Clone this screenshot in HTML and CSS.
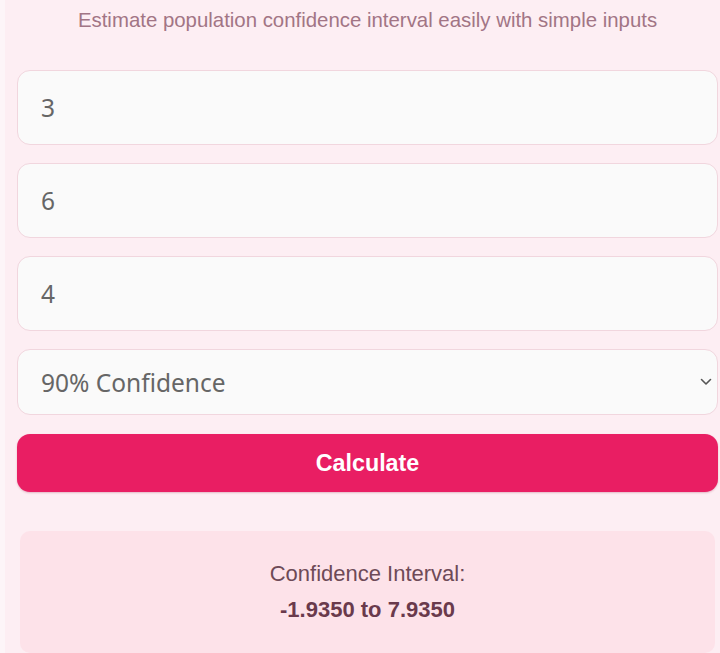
FILE: index.html
```html
<!DOCTYPE html>
<html lang="en">
<head>
<meta charset="utf-8">
<title>Confidence Interval Calculator</title>
<link rel="stylesheet" href="styles.css">
</head>
<body>
<main class="panel">
  <p class="subtitle">Estimate population confidence interval easily with simple inputs</p>
  <form class="form">
    <input class="field" type="number" value="3" aria-label="Sample mean">
    <input class="field" type="number" value="6" aria-label="Standard deviation">
    <input class="field" type="number" value="4" aria-label="Sample size">
    <div class="select-wrap">
      <select class="field select" aria-label="Confidence level">
        <option selected>90% Confidence</option>
        <option>95% Confidence</option>
        <option>99% Confidence</option>
      </select>
      <svg class="chevron" viewBox="0 0 12 8" width="12" height="8" aria-hidden="true">
        <path d="M1.5 1.5 L6 6 L10.5 1.5" fill="none" stroke="#555" stroke-width="1.6" stroke-linecap="round" stroke-linejoin="round"/>
      </svg>
    </div>
    <button class="btn" type="button">Calculate</button>
  </form>
  <section class="result">
    <div class="result-label">Confidence Interval:</div>
    <div class="result-value">-1.9350 to 7.9350</div>
  </section>
</main>
</body>
</html>
```

FILE: styles.css
```css
html, body {
  margin: 0;
  padding: 0;
}

body {
  background: #fdf5f8;
  font-family: "Liberation Sans", Arial, sans-serif;
  overflow: hidden;
}

.panel {
  margin-left: 5px;
  background: #fdeef3;
  padding: 0 2px 20px 12px;
  min-height: 653px;
  box-sizing: border-box;
}

.subtitle {
  margin: 0;
  padding-top: 8px;
  height: 70px;
  box-sizing: border-box;
  text-align: center;
  font-size: 20.4px;
  line-height: 24px;
  color: #a27585;
}

.form {
  display: flex;
  flex-direction: column;
  gap: 18px;
}

.field {
  display: block;
  width: 100%;
  box-sizing: border-box;
  height: 75px;
  padding: 0 0 0 23px;
  border: 1.5px solid #f1d6de;
  border-radius: 13px;
  background: #fafafa;
  font-family: "Noto Sans", "Open Sans", sans-serif;
  font-size: 24.5px;
  color: #666;
  outline: none;
  -moz-appearance: textfield;
}

.field::-webkit-outer-spin-button,
.field::-webkit-inner-spin-button {
  -webkit-appearance: none;
  margin: 0;
}

.select-wrap {
  position: relative;
}

.select {
  height: 66px;
  appearance: none;
  -webkit-appearance: none;
}

.chevron {
  position: absolute;
  right: 6px;
  top: 29px;
  pointer-events: none;
}

.btn {
  height: 58px;
  margin-top: 1px;
  border: none;
  border-radius: 13px;
  background: #e91e63;
  color: #fff;
  font-family: "Liberation Sans", Arial, sans-serif;
  font-weight: bold;
  font-size: 23.3px;
  box-shadow: 0 1px 2px rgba(150, 20, 60, 0.25);
}

.result {
  margin: 39px 3px 0 3px;
  background: #fde2e9;
  border-radius: 10px;
  padding: 30px 0 30px;
  text-align: center;
  color: #6e4a57;
}

.result-label {
  font-size: 22px;
  line-height: 26px;
}

.result-value {
  margin-top: 10px;
  font-size: 22px;
  line-height: 26px;
  font-weight: bold;
  color: #6a3a4c;
}
```
